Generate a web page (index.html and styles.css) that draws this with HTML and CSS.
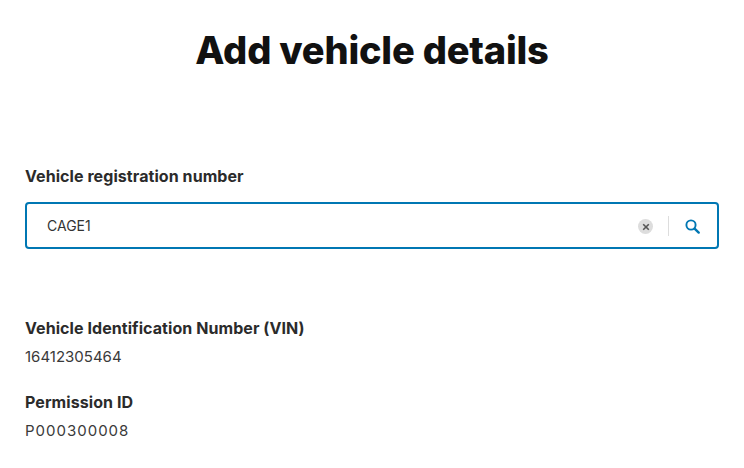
FILE: index.html
```html
<!DOCTYPE html>
<html lang="en">
<head>
    <meta charset="UTF-8">
    <meta name="viewport" content="width=device-width, initial-scale=1.0">
    <title>Add vehicle details</title>
    <link rel="stylesheet" href="styles.css">
</head>
<body>

<div class="container">
    <h1>Add vehicle details</h1>

    <!-- Registration search -->
    <label class="field-label" for="rego-input">Vehicle registration number</label>
    <div class="search-box">
        <input type="text" id="rego-input" value="CAGE1">
        <span class="clear-btn">
            <svg width="8" height="8" viewBox="0 0 8 8"><path d="M1.2 1.2l5.6 5.6M6.8 1.2L1.2 6.8" stroke="#555" stroke-width="1.6" fill="none"/></svg>
        </span>
        <span class="divider"></span>
        <span class="search-btn">
            <svg width="15" height="15" viewBox="0 0 15 15"><circle cx="6" cy="6" r="4.6" stroke="#0077b3" stroke-width="1.9" fill="none"/><path d="M9.6 9.6l4.1 4" stroke="#0077b3" stroke-width="2.4" stroke-linecap="round" fill="none"/></svg>
        </span>
    </div>

    <!-- Vehicle details -->
    <div class="detail detail-first">
        <div class="detail-label">Vehicle Identification Number (VIN)</div>
        <div class="detail-value">16412305464</div>
    </div>
    <div class="detail">
        <div class="detail-label">Permission ID</div>
        <div class="detail-value detail-value-wide">P000300008</div>
    </div>
</div>

</body>
</html>
```

FILE: styles.css
```css
body {
    font-family: "Inter", "Liberation Sans", sans-serif;
    margin: 0;
    padding: 0;
    background-color: #fff;
    color: #2b2b2b;
}

.container {
    height: 468px;
    padding: 0 25px;
    overflow: hidden;
    box-sizing: border-box;
}

h1 {
    margin: 0;
    padding-top: 28px;
    height: 140px;
    box-sizing: border-box;
    font-size: 38px;
    line-height: 44px;
    font-weight: 800;
    letter-spacing: -0.2px;
    text-align: center;
    color: #111;
}

.field-label,
.detail-label {
    display: block;
    font-size: 16px;
    line-height: 22px;
    font-weight: 700;
    letter-spacing: 0.07px;
    color: #2b2b2b;
}

.field-label {
    padding-top: 25px;
    margin-bottom: 15px;
}

.search-box {
    display: flex;
    align-items: center;
    height: 47px;
    border: 2px solid #0077b3;
    border-radius: 4px;
    box-sizing: border-box;
}

.search-box input {
    flex: 1;
    min-width: 0;
    border: 0;
    outline: 0;
    padding: 0 0 0 20px;
    font-family: inherit;
    font-size: 14px;
    color: #333;
    background: transparent;
}

.clear-btn {
    display: flex;
    align-items: center;
    justify-content: center;
    width: 15px;
    height: 15px;
    border-radius: 50%;
    background-color: #ddd;
    margin-top: 2px;
}

.divider {
    width: 1px;
    height: 20px;
    margin-left: 15px;
    background-color: #ddd;
}

.search-btn {
    display: flex;
    width: 15px;
    height: 15px;
    margin: 2px 17px 0 16px;
}

.detail {
    margin-bottom: 23px;
}

.detail-first {
    margin-top: 68px;
}

.detail-label {
    margin-bottom: 7px;
}

.detail-value {
    font-size: 15px;
    line-height: 22px;
    color: #3a3a3a;
}

.detail-value-wide {
    letter-spacing: 1px;
}
```
